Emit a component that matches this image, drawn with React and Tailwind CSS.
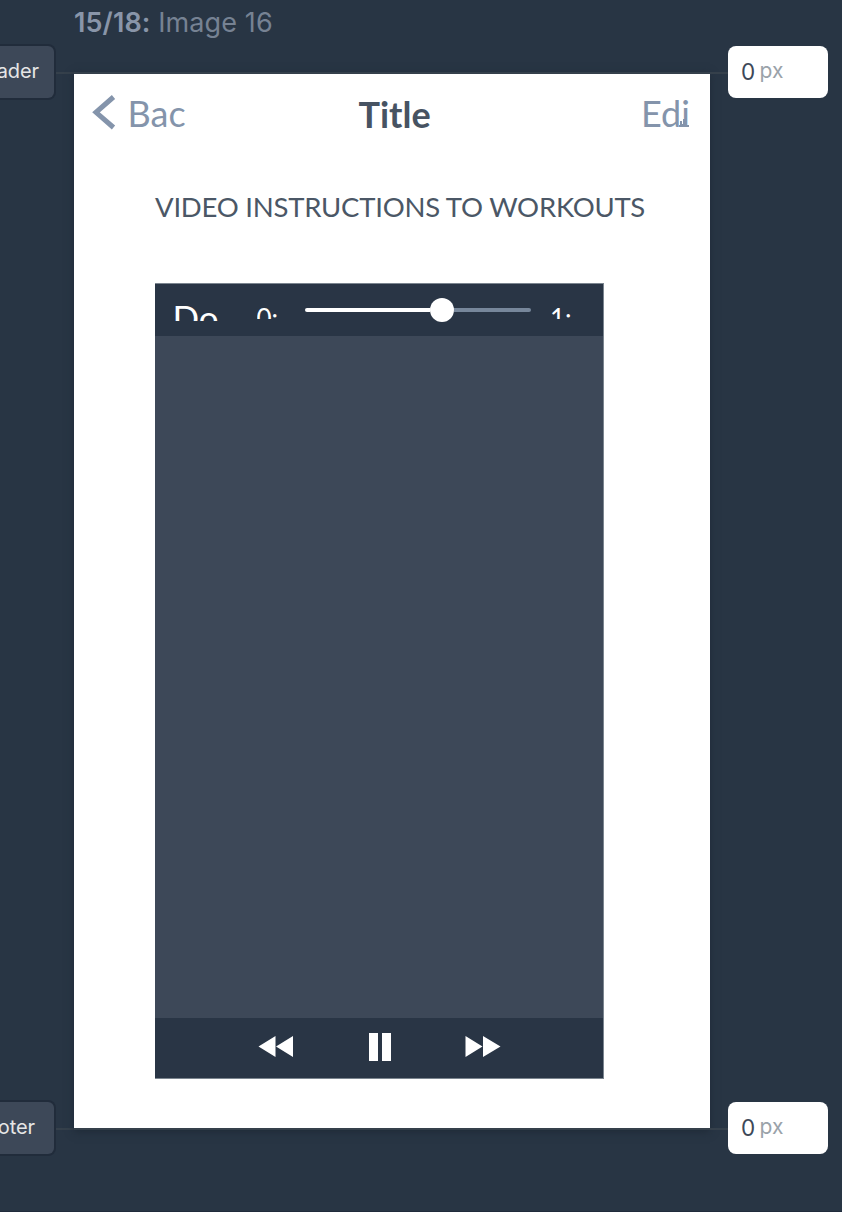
function Handle({ label, right }) {
  return (
    <div className="flex h-14 items-start">
      <div className="flex h-14 w-14 shrink-0 items-center justify-end overflow-hidden rounded-r-lg border-2 border-l-0 border-[#212c3b] bg-[#3d4858]">
        <span className={`-mt-0.5 whitespace-nowrap font-['Inter'] text-[20px] leading-6 tracking-[-0.1px] text-[#e6e6e6] ${right}`}>{label}</span>
      </div>
      <div className="mt-7 h-0.5 flex-1 bg-[#35404b]" />
    </div>
  );
}

function PixelField() {
  return (
    <div className="flex h-14 items-start">
      <div className="mt-7 h-0.5 w-[18px] bg-[#35404b]" />
      <div className="mt-0.5 flex h-[52px] w-[100px] items-center gap-1 rounded-lg bg-white pl-[13px] font-['Inter']">
        <span className="w-[14.5px] text-[22.5px] leading-6 text-[#3d4858]">0</span>
        <span className="-mt-[3px] text-[21px] leading-6 text-[#9aa2a9]">px</span>
      </div>
    </div>
  );
}

function PhoneHeader() {
  return (
    <header className="flex h-[66px] items-start pl-[18px] pt-5 font-['Lato'] text-[36px] leading-[36px] text-[#8494ab]">
      <svg className="mt-px" width="24" height="36" viewBox="0 0 24 36" fill="none" stroke="currentColor" strokeWidth="5">
        <path d="M21.5 2 L4 17.3 L21.5 32.5" />
      </svg>
      <span className="ml-[11.5px] mt-px w-[231px]">Bac</span>
      <span className="mt-0.5 w-[282.5px] font-bold text-[#475362]">Title</span>
      <span className="mt-px flex items-start">
        <span>Edi</span>
        <svg className="-ml-[11px] mt-[23px]" width="10" height="9" viewBox="0 0 10 9" fill="currentColor">
          <path d="M0 7h1V3h2v3h1V1h2v6h4v2H0z" />
        </svg>
      </span>
    </header>
  );
}

function Player() {
  return (
    <section className="mt-[69px] ml-[81px] flex h-[796px] w-[449px] flex-col border-y border-r border-[#7b858f] bg-[#3d4858] font-['Lato'] text-white">
      <div className="flex h-[52px] items-start bg-[#293545]">
        <div className="mt-[19px] ml-[17.5px] h-[17.5px] w-[46px] overflow-hidden text-[35px] leading-[35px]">
          <div className="-mt-[3px]">Do</div>
        </div>
        <div className="mt-[22px] ml-[38px] h-[13px] w-6 overflow-hidden text-[26px] leading-[28px]">
          <div className="-mt-[2px]">0:</div>
        </div>
        <div className="mt-[14px] ml-6 flex h-6 w-[226px] items-center">
          <div className="h-1 w-[125.5px] rounded-l-full bg-white" />
          <div className="size-6 shrink-0 rounded-full bg-white" />
          <div className="h-1 flex-1 rounded-r-full bg-[#77879b]" />
        </div>
        <div className="mt-[22px] ml-[19.5px] h-[13px] w-6 overflow-hidden text-[26px] leading-[28px]">
          <div className="-mt-[2px]">1:</div>
        </div>
      </div>
      <div className="flex-1" />
      <div className="flex h-[60px] items-start bg-[#293545]">
        <svg className="ml-[103px] mt-[18px]" width="36" height="22" viewBox="0 0 36 22" fill="currentColor">
          <path d="M0.5 10.5 L17.5 0 V21Z M18 10.5 L35 0 V21Z" />
        </svg>
        <div className="mt-[15px] ml-[75px] flex h-7 gap-[4px]">
          <div className="w-[9px] bg-white" />
          <div className="w-[9px] bg-white" />
        </div>
        <svg className="ml-[74px] mt-[18px]" width="36" height="22" viewBox="0 0 36 22" fill="currentColor">
          <path d="M0.5 0 L17.5 10.5 L0.5 21Z M18 0 L35.5 10.5 L18 21Z" />
        </svg>
      </div>
    </section>
  );
}

export default function App() {
  return (
    <div className="flex h-[1212px] w-[842px] overflow-hidden border-b border-[#202b3b] bg-[#283544]">
      <aside className="flex w-[74px] shrink-0 flex-col gap-[1000px] pt-11">
        <Handle label="Header" right="mr-[15px]" />
        <Handle label="Footer" right="mr-[19px]" />
      </aside>
      <main className="w-[636px] shrink-0">
        <h1 className="h-[72px] pt-[3px] font-['Inter'] text-[27px] leading-[40px] tracking-[0.1px] text-[#768293]">
          <strong className="font-semibold text-[#8995a9]">15/18:</strong> Image 16
        </h1>
        <div className="h-[1058px] border-y-2 border-[#35404b] bg-white shadow-[0_2px_8px_#1f2b38]">
          <PhoneHeader />
          <h2 className="mt-[50px] ml-[81px] h-[24px] whitespace-nowrap font-['Lato'] text-[27.5px] leading-[34px] tracking-[-0.24px] text-[#4b5766]">VIDEO INSTRUCTIONS TO WORKOUTS</h2>
          <Player />
        </div>
      </main>
      <aside className="flex w-[132px] shrink-0 flex-col gap-[1000px] pt-11">
        <PixelField />
        <PixelField />
      </aside>
    </div>
  );
}
